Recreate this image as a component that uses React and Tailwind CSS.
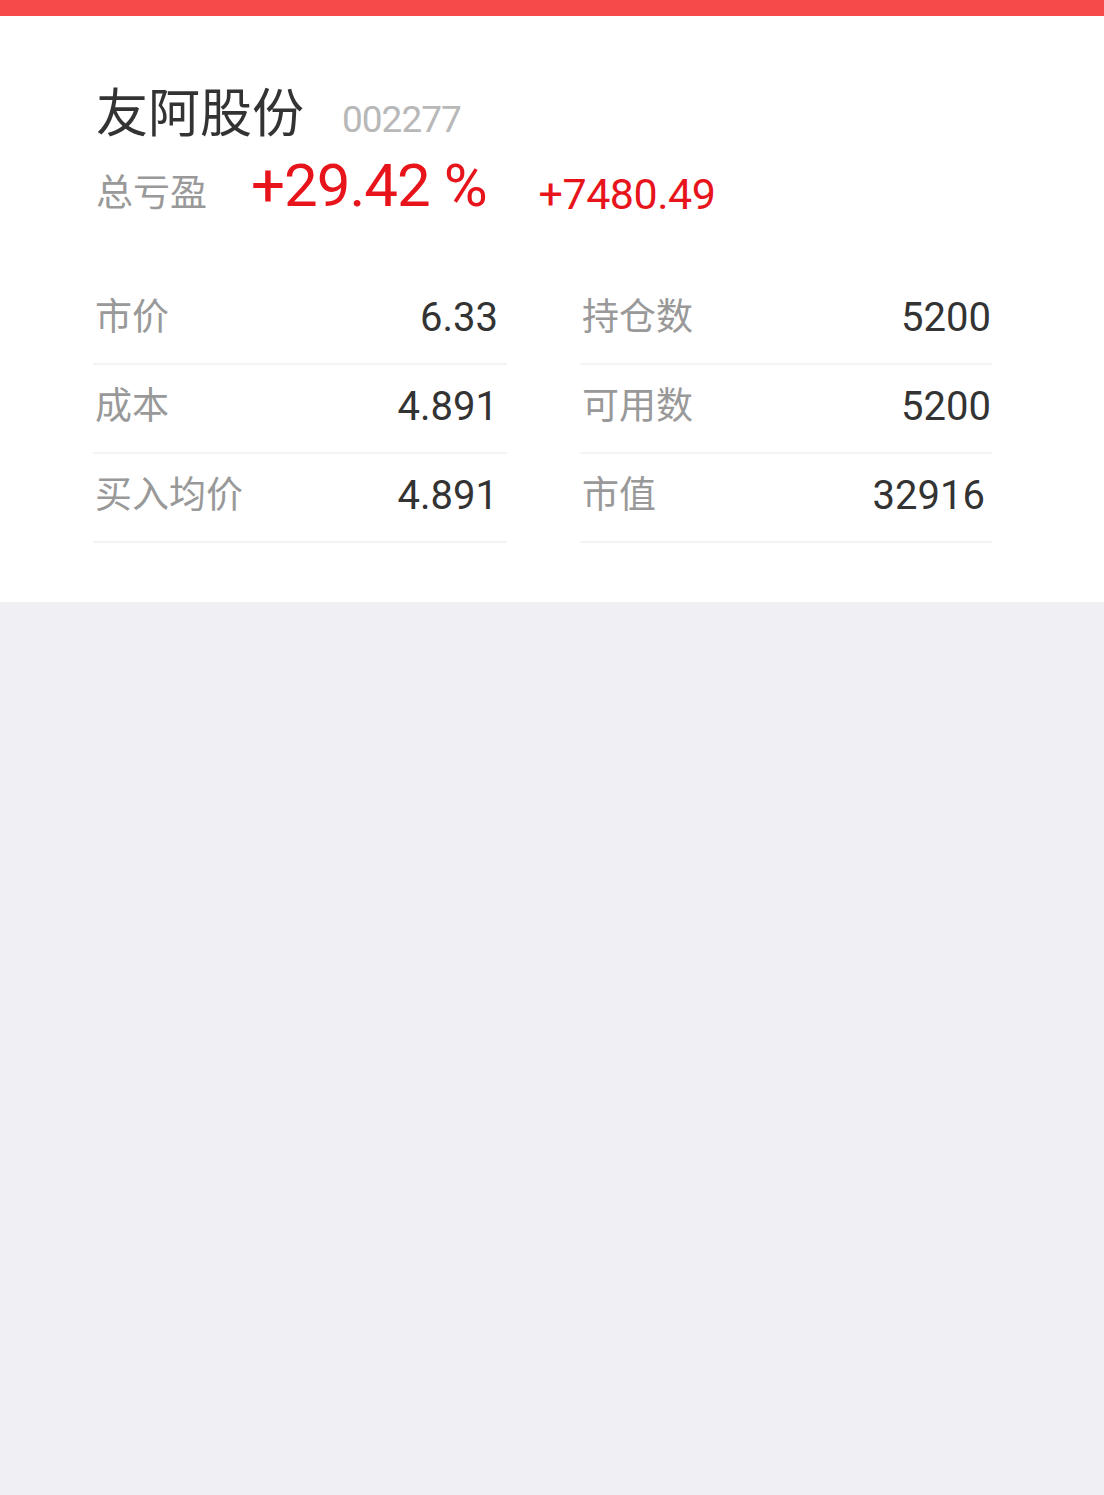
import React from 'react';

const cjk = { fontFamily: 'Roboto, "Noto Sans CJK SC", sans-serif' };

const left = [
  { label: '市价', value: '6.33' },
  { label: '成本', value: '4.891' },
  { label: '买入均价', value: '4.891' },
];

const right = [
  { label: '持仓数', value: '5200' },
  { label: '可用数', value: '5200' },
  { label: '市值', value: '32916', extra: 'pr-[7px]' },
];

function Column({ rows, valuePad }) {
  return (
    <div className="flex flex-col">
      {rows.map((r) => (
        <div
          key={r.label}
          className="flex h-[89px] items-center justify-between border-b-2 border-[#f4f4f4] pb-1 pl-[2px]"
        >
          <span className="text-[37px] leading-none text-[#999999]">{r.label}</span>
          <span className={`text-[40px] leading-none text-[#333333] ${valuePad} ${r.extra || ''}`}>{r.value}</span>
        </div>
      ))}
    </div>
  );
}

export default function App() {
  return (
    <div className="min-h-screen bg-[#efeff4]" style={cjk}>
      <div className="h-4 bg-[#f44a4a]" />
      <div className="bg-white pb-[59px] pt-[73px]">
        <div className="pl-[96px]">
          <div className="flex items-baseline">
            <h1 className="text-[52px] font-normal leading-none text-[#333333]">友阿股份</h1>
            <span className="ml-[38px] text-[37px] leading-none tracking-[-1px] text-[#b8b8b8]">002277</span>
          </div>
          <div className="mt-[15px] flex items-baseline">
            <span className="text-[37px] leading-none text-[#999999]">总亏盈</span>
            <span className="ml-[44px] text-[60px] leading-none tracking-[-1px] text-[#e8141c]">+29.42 %</span>
            <span className="ml-[52px] translate-y-[3px] text-[43px] leading-none tracking-[-0.5px] text-[#e8141c]">+7480.49</span>
          </div>
        </div>
        <div className="mt-[60px] grid grid-cols-[414px_412px] gap-x-[73px] pl-[93px]">
          <Column rows={left} valuePad="pr-[9px]" />
          <Column rows={right} valuePad="pr-[1px]" />
        </div>
      </div>
    </div>
  );
}
